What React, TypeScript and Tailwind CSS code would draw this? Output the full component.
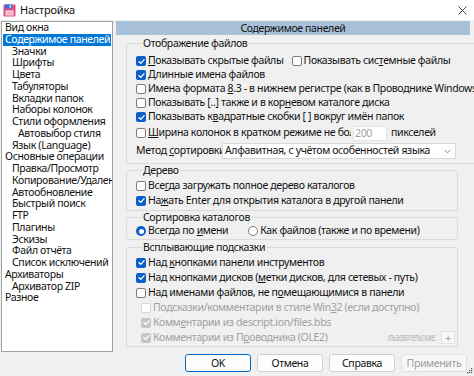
import React from 'react';

type Item = { text: string; level: number; selected?: boolean };

const treeItems: Item[] = [
    { text: 'Вид окна', level: 0 },
    { text: 'Содержимое панелей', level: 0, selected: true },
    { text: 'Значки', level: 1 },
    { text: 'Шрифты', level: 1 },
    { text: 'Цвета', level: 1 },
    { text: 'Табуляторы', level: 1 },
    { text: 'Вкладки папок', level: 1 },
    { text: 'Наборы колонок', level: 1 },
    { text: 'Стили оформления', level: 1 },
    { text: 'Автовыбор стиля', level: 2 },
    { text: 'Язык (Language)', level: 1 },
    { text: 'Основные операции', level: 0 },
    { text: 'Правка/Просмотр', level: 1 },
    { text: 'Копирование/Удаление', level: 1 },
    { text: 'Автообновление', level: 1 },
    { text: 'Быстрый поиск', level: 1 },
    { text: 'FTP', level: 1 },
    { text: 'Плагины', level: 1 },
    { text: 'Эскизы', level: 1 },
    { text: 'Файл отчёта', level: 1 },
    { text: 'Список исключений', level: 1 },
    { text: 'Архиваторы', level: 0 },
    { text: 'Архиватор ZIP', level: 1 },
    { text: 'Разное', level: 0 },
];

const indent = ['pl-[2px]', 'pl-[9px]', 'pl-[15px]'];

const Check: React.FC<{ checked?: boolean; disabled?: boolean }> = ({ checked, disabled }) =>
    checked ? (
        <span className={`w-[10px] h-[10px] rounded-[2px] shrink-0 flex items-center justify-center ${disabled ? 'bg-[#c6c6c6]' : 'bg-[#0b5fc9]'}`}>
            <svg viewBox="0 0 10 10" className="w-[9px] h-[9px]">
                <path d="M2.2 5.2 L4.2 7.1 L7.9 2.9" stroke="white" strokeWidth="1.4" fill="none" strokeLinecap="round" strokeLinejoin="round" />
            </svg>
        </span>
    ) : (
        <span className={`w-[10px] h-[10px] rounded-[2px] shrink-0 border bg-white ${disabled ? 'border-[#d6d6d6]' : 'border-[#7c7c7c]'}`} />
    );

const Radio: React.FC<{ checked?: boolean }> = ({ checked }) =>
    checked ? (
        <span className="w-[10px] h-[10px] rounded-full shrink-0 bg-[#0b5fc9] flex items-center justify-center">
            <span className="w-[5px] h-[5px] rounded-full bg-white" />
        </span>
    ) : (
        <span className="w-[10px] h-[10px] rounded-full shrink-0 border border-[#7c7c7c] bg-white" />
    );

const Group: React.FC<{ title: string; className: string; children: React.ReactNode }> = ({ title, className, children }) => (
    <fieldset className={`ml-[10px] w-[332px] border border-[#dadada] rounded-[3px] ${className}`}>
        <legend className="ml-[6px] px-[1px] leading-[12px]">{title}</legend>
        {children}
    </fieldset>
);

const Row: React.FC<{ h: string; children: React.ReactNode; className?: string }> = ({ h, children, className = '' }) => (
    <div className={`flex items-center whitespace-nowrap overflow-hidden gap-[2px] pr-[2px] ${h} ${className}`}>{children}</div>
);

export default function App() {
    return (
        <div className="w-[474px] h-[376px] bg-[#f0f0f0] flex flex-col overflow-hidden relative text-[10.5px] tracking-[-0.35px] text-[#111] font-['Noto_Sans',sans-serif]">
            {/* title bar */}
            <div className="h-[20px] bg-white flex items-center pl-[3px] pr-[7px] shrink-0">
                <svg viewBox="0 0 13 13" className="w-[13px] h-[13px]">
                    <rect x="0.5" y="0.5" width="12" height="12" rx="1" fill="#e24c7e" />
                    <rect x="2" y="0.5" width="7" height="4" fill="#2f6fd6" />
                    <rect x="6.5" y="1.2" width="1.6" height="2.6" fill="#cfe0ff" />
                    <rect x="2.5" y="6.5" width="8" height="5" fill="#fbe6ee" />
                    <line x1="3.5" y1="8.2" x2="9.5" y2="8.2" stroke="#e24c7e" strokeWidth="0.6" />
                    <line x1="3.5" y1="10" x2="9.5" y2="10" stroke="#e24c7e" strokeWidth="0.6" />
                </svg>
                <span className="ml-[4px] text-[11px] tracking-[-0.2px]">Настройка</span>
                <svg viewBox="0 0 10 10" className="ml-auto w-[9px] h-[9px]">
                    <path d="M0.5 0.5 L9.5 9.5 M9.5 0.5 L0.5 9.5" stroke="#2a2a2a" strokeWidth="1" />
                </svg>
            </div>

            <div className="flex pt-px">
                {/* tree list */}
                <div className="ml-[1px] w-[112px] h-[331px] bg-white border border-[#a3a3a3] px-[1px] overflow-hidden shrink-0">
                    {treeItems.map((it, i) => (
                        <div
                            key={i}
                            className={`h-[11.75px] leading-[11.75px] whitespace-nowrap ${indent[it.level]} ${it.selected ? 'bg-[#0078d7] text-white' : ''}`}
                        >
                            {it.text}
                        </div>
                    ))}
                </div>

                {/* right side */}
                <div className="ml-[3px] w-[354px] flex flex-col">
                    <div className="h-[14px] bg-[#a9c0da] flex items-center justify-center leading-[14px]">Содержимое панелей</div>

                    <Group title="Отображение файлов" className="mt-[2px] pt-[5px] pb-[4px] pl-[9px]">
                        <Row h="h-[14px]">
                            <Check checked /><span><u>П</u>оказывать скрытые файлы</span>
                            <span className="ml-[6px] flex items-center gap-[2px]"><Check /><span>Показывать сис<u>т</u>емные файлы</span></span>
                        </Row>
                        <Row h="h-[14px]"><Check checked /><span>Длинные имена файлов</span></Row>
                        <Row h="h-[14px]"><Check /><span>Имена формата <u>8</u>.3 - в нижнем регистре (как в Проводнике Windows)</span></Row>
                        <Row h="h-[14px]"><Check /><span>Показывать [..] также и в кор<u>н</u>евом каталоге диска</span></Row>
                        <Row h="h-[14px]"><Check checked /><span>Показывать к<u>в</u>адратные скобки [ ] вокруг имён папок</span></Row>
                        <Row h="h-[16px]" className="mt-[1px]">
                            <Check />
                            <span className="w-[203px] overflow-hidden"><u>Ш</u>ирина колонок в кратком режиме не более</span>
                            <span className="w-[34px] h-[15px] bg-white border border-[#e4e4e4] pl-[1px] text-[#a0a0a0] leading-[13px]">200</span>
                            <span className="ml-[2px]">пикселей</span>
                        </Row>
                        <div className="mt-[2px] h-[16px] flex items-center whitespace-nowrap">
                            <span className="w-[86px] overflow-hidden">Метод <u>с</u>ортировки</span>
                            <div className="w-[234px] h-[16px] bg-white border border-[#d8d8d8] flex items-center pl-[2px] pr-[4px] overflow-hidden">
                                <span className="flex-1 overflow-hidden">Алфавитная, с учётом особенностей языка</span>
                                <svg viewBox="0 0 8 5" className="w-[7px] h-[5px] shrink-0 ml-[3px]">
                                    <path d="M0.5 0.5 L4 4 L7.5 0.5" stroke="#6a6a6a" strokeWidth="0.9" fill="none" />
                                </svg>
                            </div>
                        </div>
                    </Group>

                    <Group title="Дерево" className="pt-[2px] pb-[2px] pl-[9px]">
                        <Row h="h-[15px]"><Check /><span>Все<u>г</u>да загружать полное дерево каталогов</span></Row>
                        <Row h="h-[15px]"><Check checked /><span>На<u>ж</u>ать Enter для открытия каталога в другой панели</span></Row>
                    </Group>

                    <Group title="Сортировка каталогов" className="pt-[1px] pb-[1px] pl-[9px]">
                        <Row h="h-[14px]">
                            <Radio checked /><span>Всегда по <u>и</u>мени</span>
                            <span className="ml-[18px] flex items-center gap-[2px]"><Radio /><span>Как файлов (также и по времени)</span></span>
                        </Row>
                    </Group>

                    <Group title="Всплывающие подсказки" className="mt-[1px] pt-[2px] pb-[1px] pl-[9px]">
                        <Row h="h-[15px]"><Check checked /><span>Над <u>к</u>нопками панели инструментов</span></Row>
                        <Row h="h-[15px]"><Check checked /><span>Над кнопками дисков (<u>м</u>етки дисков, для сетевых - путь)</span></Row>
                        <Row h="h-[15px]"><Check /><span>Над именами файлов, не п<u>о</u>мещающимися в панели</span></Row>
                        <Row h="h-[15px]" className="pl-[5px] text-[#a0a0a0]"><Check disabled /><span>Подсказки/комментарии в стиле Win<u>3</u>2 (если доступно)</span></Row>
                        <Row h="h-[15px]" className="pl-[5px] text-[#a0a0a0]"><Check checked disabled /><span>Комм<u>е</u>нтарии из descript.ion/files.bbs</span></Row>
                        <Row h="h-[15px]" className="pl-[5px] text-[#a0a0a0]">
                            <Check checked disabled /><span>Комментарии из П<u>р</u>оводника (OLE2)</span>
                            <span className="ml-auto w-[48px] flex justify-end overflow-hidden text-[#b4b4b4]">
                                <span className="inline-block shrink-0 scale-x-[0.6] origin-right">пользовательские:</span>
                            </span>
                            <span className="ml-[3px] w-[14px] h-[13px] border border-[#e2e2e2] bg-[#f7f7f7] flex items-center justify-center leading-none text-[10px]">+</span>
                        </Row>
                    </Group>

                    <div className="mt-[7px] flex justify-end gap-[6px] pr-[3px]">
                        <button className="w-[66px] h-[18px] rounded-[3px] border border-[#0067c0] bg-[#fdfdfd] leading-none">OK</button>
                        <button className="w-[66px] h-[18px] rounded-[3px] border border-[#d0d0d0] bg-[#fdfdfd] leading-none">Отмена</button>
                        <button className="w-[66px] h-[18px] rounded-[3px] border border-[#d0d0d0] bg-[#fdfdfd] leading-none">Справка</button>
                        <button className="w-[66px] h-[18px] rounded-[3px] border border-[#e0e0e0] bg-[#f7f7f7] text-[#a0a0a0] leading-none">Применить</button>
                    </div>
                </div>
            </div>

            {/* size grip */}
            <svg viewBox="0 0 6 6" className="absolute right-[1px] bottom-[2px] w-[6px] h-[6px]">
                <rect x="4" y="0" width="1.2" height="1.2" fill="#555" />
                <rect x="2" y="2" width="1.2" height="1.2" fill="#555" />
                <rect x="4" y="2" width="1.2" height="1.2" fill="#555" />
                <rect x="0" y="4" width="1.2" height="1.2" fill="#555" />
                <rect x="2" y="4" width="1.2" height="1.2" fill="#555" />
                <rect x="4" y="4" width="1.2" height="1.2" fill="#555" />
            </svg>
        </div>
    );
}
